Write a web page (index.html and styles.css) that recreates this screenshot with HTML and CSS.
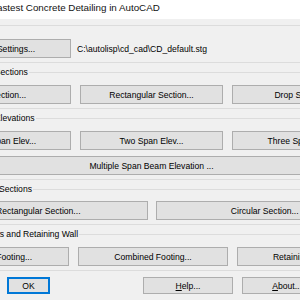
FILE: index.html
```html
<!DOCTYPE html>
<html>
<head>
<meta charset="utf-8">
<link rel="stylesheet" href="styles.css">
</head>
<body>
<div class="dialog">
  <div class="titlebar"><span class="title">Fastest Concrete Detailing in AutoCAD</span></div>
  <div class="client">
    <fieldset class="group group-plain">
      <div class="row">
        <button class="btn btn-settings">Settings...</button>
        <span class="path">C:\autolisp\cd_cad\CD_default.stg</span>
      </div>
    </fieldset>
    <fieldset class="group">
      <legend>Beam Sections</legend>
      <div class="row three">
        <button class="btn">Tee Section...</button>
        <button class="btn">Rectangular Section...</button>
        <button class="btn">Drop Section...</button>
      </div>
    </fieldset>
    <fieldset class="group">
      <legend>Beam Elevations</legend>
      <div class="row three">
        <button class="btn">Single Span Elev...</button>
        <button class="btn">Two Span Elev...</button>
        <button class="btn">Three Span Elev...</button>
      </div>
      <div class="row row-gap">
        <button class="btn btn-wide">Multiple Span Beam Elevation ...</button>
      </div>
    </fieldset>
    <fieldset class="group group-columns">
      <legend>Column Sections</legend>
      <div class="row two">
        <button class="btn">Rectangular Section...</button>
        <button class="btn">Circular Section...</button>
      </div>
    </fieldset>
    <fieldset class="group group-footings">
      <legend>Footings and Retaining Wall</legend>
      <div class="row footings">
        <button class="btn">Isolated Footing...</button>
        <button class="btn">Combined Footing...</button>
        <button class="btn">Retaining Wall...</button>
      </div>
    </fieldset>
    <div class="actions">
      <button class="btn btn-ok"><span class="focus">OK</span></button>
      <button class="btn btn-help"><u>H</u>elp...</button>
      <button class="btn btn-about"><u>A</u>bout...</button>
    </div>
  </div>
</div>
</body>
</html>
```
FILE: styles.css
```css
html, body {
  margin: 0;
  padding: 0;
  width: 300px;
  height: 300px;
  overflow: hidden;
  background: #f0f0f0;
}
.dialog {
  margin-left: -80px;
  width: 480px;
  font-family: "Liberation Sans", Arial, sans-serif;
  font-size: 8.6px;
  color: #000;
}
.titlebar {
  height: 19px;
  background: #ffffff;
  display: flex;
  align-items: center;
  padding-left: 71px;
}
.title {
  font-size: 9.8px;
  color: #111;
  position: relative;
  top: -2px;
}
.client {
  background: #f0f0f0;
  padding-top: 6px;
  display: flex;
  flex-direction: column;
}
.group {
  margin: 0;
  width: 445px;
  padding: 8px 8px 4px 8px;
  border: 1px solid #dcdcdc;
  min-width: 0;
}
.group + .group {
  margin-top: 4px;
}
.group-plain {
  padding-top: 13px;
}
.group legend {
  margin-left: 40px;
  padding: 0 1px;
  height: 10px;
  line-height: 10px;
  font-size: 8.6px;
}
.group-columns {
  margin-top: 6px;
}
.group-columns legend {
  margin-left: 37px;
  margin-bottom: -1px;
}
.group-footings legend {
  margin-left: 41px;
}
.row {
  display: flex;
  align-items: center;
}
.row-gap {
  margin-top: 6px;
}
.three {
  display: grid;
  grid-template-columns: repeat(3, 1fr);
  column-gap: 9px;
}
.two {
  display: grid;
  grid-template-columns: repeat(2, 1fr);
  column-gap: 8px;
}
.footings {
  margin-left: -2px;
  display: grid;
  grid-template-columns: 142px 150px 134px;
  column-gap: 9px;
}
.btn {
  height: 19px;
  background: #e1e1e1;
  border: 1px solid #adadad;
  border-radius: 0;
  padding: 0;
  margin: 0;
  font-family: "Liberation Sans", Arial, sans-serif;
  font-size: 8.6px;
  color: #000;
  text-align: center;
}
.btn u {
  text-decoration-thickness: 1px;
}
.btn-settings {
  width: 110px;
  margin-left: 32px;
}
.path {
  margin-left: 6px;
}
.btn-wide {
  width: 100%;
}
.actions {
  display: flex;
  margin-top: 6px;
}
.actions .btn {
  height: 17px;
}
.btn-ok {
  margin-left: 87px;
  width: 43px;
  border: 1px solid #0078d7;
  box-shadow: inset 0 0 0 1px #0078d7;
}
.btn-help {
  margin-left: 93px;
  width: 90px;
}
.btn-about {
  margin-left: 9px;
  width: 90px;
}
```
